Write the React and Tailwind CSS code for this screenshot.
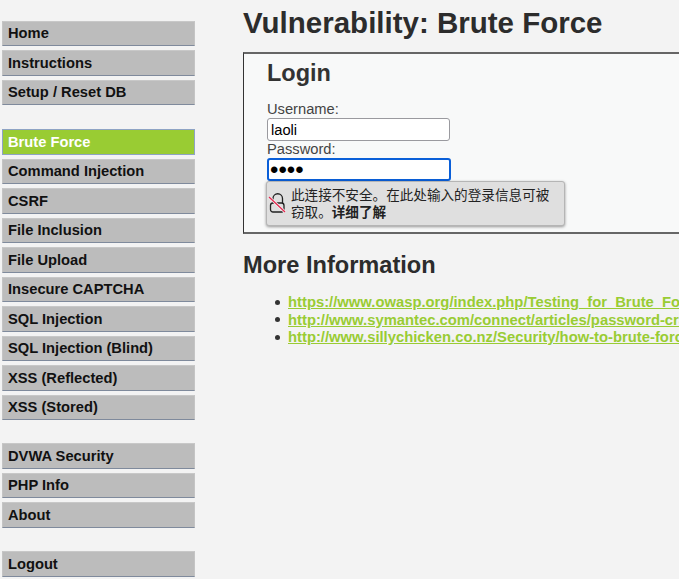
import React from "react";

const MENU_GROUPS = [
  { margin: "", items: ["Home", "Instructions", "Setup / Reset DB"] },
  {
    margin: "mt-[24px]",
    items: [
      "Brute Force",
      "Command Injection",
      "CSRF",
      "File Inclusion",
      "File Upload",
      "Insecure CAPTCHA",
      "SQL Injection",
      "SQL Injection (Blind)",
      "XSS (Reflected)",
      "XSS (Stored)",
    ],
  },
  { margin: "mt-[23px]", items: ["DVWA Security", "PHP Info", "About"] },
  { margin: "mt-[23.5px]", items: ["Logout"] },
];

const LINKS = [
  "https://www.owasp.org/index.php/Testing_for_Brute_Force_(OWASP-AT-004)",
  "http://www.symantec.com/connect/articles/password-crackers-ensuring-security-your-password",
  "http://www.sillychicken.co.nz/Security/how-to-brute-force-http-forms-in-windows.html",
];

function MenuItem({ label }) {
  const selected = label === "Brute Force";
  return (
    <li
      className={`h-[25.5px] pl-[5px] pt-[1px] flex items-center border text-[14.7px] leading-none font-bold ${
        selected
          ? "bg-[#99cc33] text-white border-[#8ea3c4]"
          : "bg-[#bcbcbc] text-[#111] border-x-[#c4c4c4] border-t-[#c8c8c8] border-b-[#7f8a9c]"
      }`}
    >
      {label}
    </li>
  );
}

function LockOffIcon() {
  return (
    <svg width="18" height="21" viewBox="0 0 18 21" fill="none" className="shrink-0">
      <path d="M5 10V5.5a4.5 4.5 0 0 1 9.5 0V10" stroke="#222" strokeWidth="1.3" />
      <rect x="2.5" y="10" width="13.5" height="9" rx="2.5" stroke="#222" strokeWidth="1.3" />
      <path d="M1 4l16 15" stroke="#f2f2f2" strokeWidth="3" />
      <path d="M1 4l16 15" stroke="#e5284f" strokeWidth="1.3" />
    </svg>
  );
}

export default function App() {
  return (
    <div className="w-[679px] h-[579px] overflow-hidden bg-[#f3f3f3] flex font-['Liberation_Sans',Arial,sans-serif] text-[#333]">
      <nav className="w-[243px] shrink-0 pl-[2px] pr-[48px] pt-[20.5px]">
        {MENU_GROUPS.map((group) => (
          <ul key={group.items[0]} className={`flex flex-col gap-[4px] ${group.margin}`}>
            {group.items.map((item) => (
              <MenuItem key={item} label={item} />
            ))}
          </ul>
        ))}
      </nav>

      <main className="flex-1 min-w-0">
        <h1 className="mt-[5px] text-[29.5px] leading-[35px] font-bold text-[#2c2c2c] whitespace-nowrap">
          Vulnerability: Brute Force
        </h1>

        <section className="relative mt-[12px] h-[182px] w-[460px] border-y-2 border-l border-[#666] border-l-[#333] bg-[#f8f9f9] pl-[23px]">
          <h2 className="mt-[5px] text-[23.5px] leading-[28px] font-bold text-[#333]">Login</h2>
          <label className="block mt-[14px] text-[14.7px] leading-[17px] text-[#444]">Username:</label>
          <input
            readOnly
            value="laoli"
            className="block w-[183px] h-[23px] px-[3px] bg-white border border-[#9a9a9f] rounded-[3px] text-[14.7px] text-black outline-none font-['Liberation_Sans',Arial,sans-serif]"
          />
          <label className="block text-[14.7px] leading-[17px] text-[#444]">Password:</label>
          <input
            readOnly
            type="password"
            value="laol"
            className="block w-[184px] h-[23px] px-[1px] bg-white border-2 border-[#0a5fd8] rounded-[3px] text-[24px] leading-[19px] text-black outline-none"
          />
          <div className="absolute left-[22px] top-[127px] w-[299px] h-[45px] flex items-start gap-[5px] pl-[1px] pr-[10px] pt-[5px] bg-[#dfdfdf] border border-[#b5b5b5] rounded-[3px] shadow-[0_1px_3px_rgba(0,0,0,0.4)] text-[13.6px] leading-[17px] text-[#222] font-['Liberation_Sans','Noto_Sans_CJK_SC',sans-serif]">
            <div className="pt-[6px]">
              <LockOffIcon />
            </div>
            <p className="m-0">
              此连接不安全。在此处输入的登录信息可被窃取。<b className="font-bold">详细了解</b>
            </p>
          </div>
        </section>

        <h2 className="mt-[17px] text-[23.6px] leading-[28px] font-bold text-[#2c2c2c]">More Information</h2>

        <ul className="mt-[14.5px] pl-[32px] w-[560px]">
          {LINKS.map((link) => (
            <li key={link} className="flex items-center gap-[8px] h-[17.5px] text-[14.8px] font-bold whitespace-nowrap">
              <span className="w-[5px] h-[5px] rounded-full bg-[#333] shrink-0" />
              <a href="#" className="text-[#99cc33] underline">
                {link}
              </a>
            </li>
          ))}
        </ul>
      </main>
    </div>
  );
}
